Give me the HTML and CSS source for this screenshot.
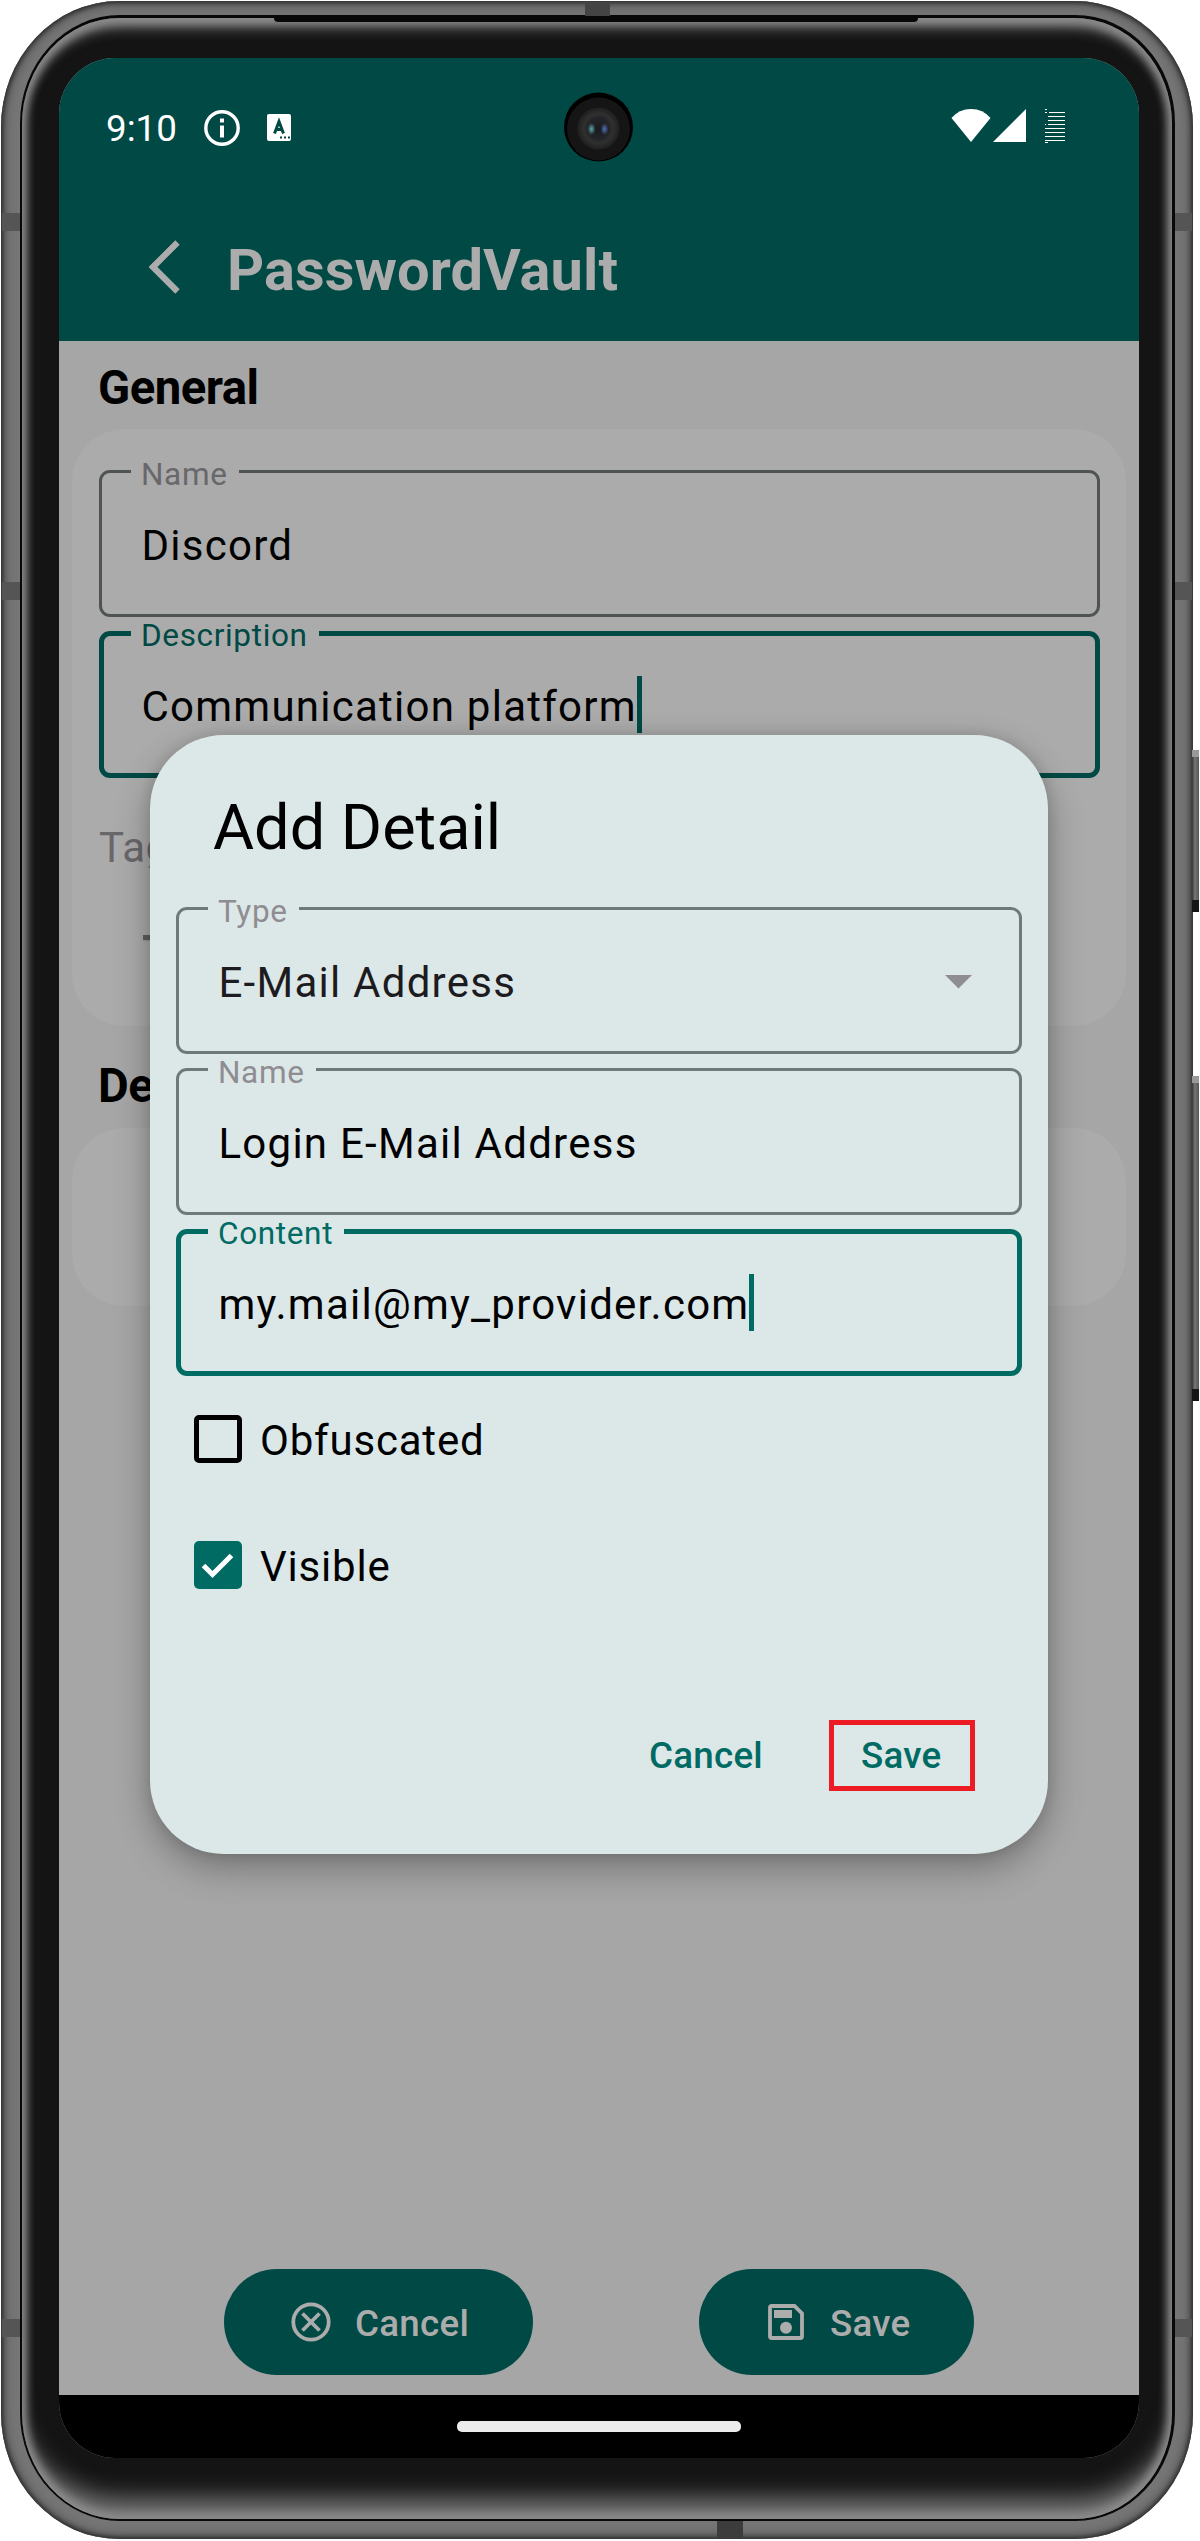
FILE: index.html
```html
<!DOCTYPE html>
<html lang="en">
<head>
<meta charset="utf-8">
<title>PasswordVault</title>
<link rel="stylesheet" href="styles.css">
</head>
<body>
<div class="phone">
  <i class="band band-left b1"></i><i class="band band-left b2"></i><i class="band band-left b3"></i>
  <i class="band band-right b1"></i><i class="band band-right b2"></i><i class="band band-right b3"></i>
  <i class="band band-top"></i><i class="band band-bottom"></i>
  <i class="key key-power"></i><i class="key key-volume"></i>
  <div class="seam">
    <div class="glass">
      <i class="speaker"></i>
      <div class="screen">
        <header class="appbar">
          <div class="status">
            <span class="clock">9:10</span>
            <svg class="st-info" width="36" height="36" viewBox="0 0 36 36"><circle cx="18" cy="18" r="16.2" fill="none" stroke="#fff" stroke-width="3.4"/><path d="M16 8.5h4v4h-4zM16 15.5h4v12h-4z" fill="#fff"/></svg>
            <svg class="st-a" width="24" height="27" viewBox="0 0 24 27"><rect width="24" height="27" rx="2" fill="#fff"/><path d="M7.5 19.5 12 7.500 16.500 19.500M9 15.500h6" fill="none" stroke="#004944" stroke-width="3"/><path d="M13 22.500h2v2h-2zM17 22.500h2v2h-2zM21 22.500h2v2h-2z" fill="#004944"/></svg>
            <span class="grow"></span>
            <svg class="st-wifi" width="40" height="33" viewBox="0 0 40 33"><path d="M0.500 9Q8 0 20 0T39.500 9L20 33z" fill="#fff"/></svg>
            <svg class="st-cell" width="33" height="33" viewBox="0 0 33 33"><path d="M0 33 33 0v33z" fill="#fff"/></svg>
            <svg class="st-batt" width="20" height="34" viewBox="0 0 20 34" shape-rendering="crispEdges"><path d="M4 3h16v1H4zM3 7h17v1H3zM3 11h17v1H3zM3 15h17v1H3zM0 19h20v1H0zM0 23h20v1H0zM0 27h20v1H0zM0 31h20v1H0zM0 0h2v1H0zM0 3h2v1H0zM0 15h1v1H0zM0 33h3v1H0z" fill="#fff"/></svg>
          </div>
          <div class="titlebar">
            <svg width="32" height="54" viewBox="0 0 32 54"><path d="M28.500 2.500 4 27l24.500 24.500" fill="none" stroke="#acacac" stroke-width="6.200"/></svg>
            <h1>PasswordVault</h1>
          </div>
        </header>
        <main class="content">
          <h2>General</h2>
          <section class="card general">
            <div class="field dim"><label>Name</label><span class="value">Discord</span></div>
            <div class="field dim active"><label>Description</label><span class="value">Communication platform</span><i class="caret"></i></div>
            <div class="tags">Tags</div>
            <svg class="plus" width="37" height="37" viewBox="0 0 37 37"><path d="M0 18.500h37M18.500 0v37" stroke="#5e6061" stroke-width="5.250"/></svg>
          </section>
          <h2 class="second">Details</h2>
          <section class="card details"></section>
          <div class="actions">
            <button class="pill pill-cancel"><svg width="40" height="40" viewBox="0 0 40 40"><circle cx="20" cy="20" r="17.700" fill="none" stroke="#acacac" stroke-width="3.800"/><path d="m11.500 11.500 17 17m0-17-17 17" stroke="#acacac" stroke-width="3.800"/></svg><span>Cancel</span></button>
            <button class="pill pill-save"><svg width="36" height="36" viewBox="0 0 36 36"><path d="M3.500 2H26.500L34 9.500V32.500Q34 34 32.500 34H3.500Q2 34 2 32.500V3.500Q2 2 3.500 2z" fill="none" stroke="#acacac" stroke-width="3.800"/><path d="M6 6h18v8H6z" fill="#acacac"/><circle cx="18" cy="23.700" r="6" fill="#acacac"/></svg><span>Save</span></button>
          </div>
        </main>
        <footer class="navbar"><i class="handle"></i></footer>
        <div class="dialog">
          <h3>Add Detail</h3>
          <div class="field"><label>Type</label><span class="value soft">E-Mail Address</span><i class="grow"></i><svg class="arrow" width="27" height="14" viewBox="0 0 27 14"><path d="M0 0h27L13.500 13.500z" fill="#8f8d92"/></svg></div>
          <div class="field"><label>Name</label><span class="value">Login E-Mail Address</span></div>
          <div class="field active"><label>Content</label><span class="value">my.mail@my_provider.com</span><i class="caret"></i></div>
          <div class="check"><i class="box"></i><span>Obfuscated</span></div>
          <div class="check"><i class="box on"><svg width="48" height="48" viewBox="0 0 48 48"><path d="M9.500 24.500 18.500 33.500 37.500 14.500" fill="none" stroke="#fff" stroke-width="5"/></svg></i><span>Visible</span></div>
          <div class="buttons"><span class="text-btn">Cancel</span><span class="text-btn boxed">Save</span></div>
        </div>
        <svg class="camera" width="70" height="70" viewBox="0 0 70 70">
          <defs>
            <radialGradient id="ring"><stop offset="0" stop-color="#1a1b20"/><stop offset=".5" stop-color="#232427"/><stop offset=".7" stop-color="#303030"/><stop offset="1" stop-color="#1f1f1f"/></radialGradient>
            <radialGradient id="teal"><stop offset="0" stop-color="#58a8a8"/><stop offset="1" stop-color="#58a8a8" stop-opacity="0"/></radialGradient>
            <radialGradient id="blue"><stop offset="0" stop-color="#4f70c0"/><stop offset="1" stop-color="#4f70c0" stop-opacity="0"/></radialGradient>
          </defs>
          <circle cx="34.500" cy="35" r="34.500" fill="#000"/><circle cx="34.500" cy="37" r="31.500" fill="#151515"/><circle cx="34.500" cy="36.500" r="21" fill="url(#ring)"/>
          <ellipse cx="27.500" cy="37" rx="4" ry="6" fill="url(#teal)"/><ellipse cx="40.500" cy="37" rx="4" ry="6" fill="url(#blue)"/>
        </svg>
      </div>
    </div>
  </div>
</div>
</body>
</html>
```
FILE: styles.css
```css
* { box-sizing: border-box; }
body { margin: 0; background: #fff; font-family: Roboto, "Liberation Sans", sans-serif; }
h1, h2, h3 { margin: 0; font-weight: 400; }
i { display: block; font-style: normal; }
svg { display: block; flex: none; }
.grow { flex: 1; }

/* Device body */
.phone {
  position: relative; width: 1192px; height: 2538px; margin: 1px 0 0 1px; padding: 14px 18px 18px 19px;
  border-radius: 118px / 126px; background: #767676;
  box-shadow: inset 0 0 4px 2px #2c2e2d, inset 0 0 12px 3px #505050;
}
.seam { height: 100%; padding: 3px 3px 2px 2px; border-radius: 100px / 108px; background: #080808; }
.glass {
  position: relative; height: 100%; padding: 40px 35px 61px 37px; border-radius: 98px / 106px; background: #141414;
  box-shadow: inset 0 0 8px 5px #8c8c8c, inset 0 18px 14px -9px #7c7c7c, inset 0 -34px 24px -14px #7c7c7c;
}
.speaker { position: absolute; left: 252px; top: 0; width: 644px; height: 4px; background: #080808; border-radius: 0 0 8px 8px; }
.band { position: absolute; background: #555; }
.band-left { left: 1px; width: 18px; height: 18px; }
.band-right { right: 1px; width: 17px; height: 18px; }
.b1 { top: 212px; } .b2 { top: 581px; } .b3 { top: 2318px; }
.band-top { left: 584px; top: 1px; width: 25px; height: 14px; background: #444; }
.band-bottom { left: 716px; bottom: 1px; width: 26px; height: 17px; background: #3c3c3c; }
.key { position: absolute; left: 1191px; width: 7px; background: linear-gradient(90deg, #333, #777 40%, #555); border-top: 7px solid #999; border-bottom: 12px solid #151515; }
.key-power { top: 749px; height: 162px; }
.key-volume { top: 1075px; height: 325px; }

/* Screen */
.screen { position: relative; display: flex; flex-direction: column; width: 1080px; height: 2400px; border-radius: 56px; overflow: hidden; background: #a6a6a6; }
.appbar { height: 283px; background: #004944; flex: none; }
.status { display: flex; height: 134px; padding: 51px 74px 0 47px; color: #fff; }
.clock { width: 98px; padding-top: 1px; font-size: 36.750px; line-height: 37px; }
.st-info { margin: 1px 27px 0 0; }
.st-a { margin-top: 5px; }
.st-cell { margin: 0 19px 0 2px; }
.titlebar { display: flex; align-items: center; gap: 46px; height: 149px; padding: 0 0 0 90px; }
.titlebar h1 { padding-top: 7px; font-size: 57.750px; line-height: 70px; font-weight: 700; letter-spacing: .100px; color: #acacac; }

.content { flex: 1; display: flex; flex-direction: column; padding: 18px 13px 0; }
.content h2 { font-size: 47.250px; line-height: 56px; height: 70px; padding: 1px 0 0 26px; font-weight: 700; letter-spacing: -.500px; color: #000; }
.content .second { height: 72px; margin-top: 30px; padding-top: 2px; }
.card { background: #ababab; border-radius: 52.500px; }
.general { height: 597px; padding: 41px 26px 0 27px; }
.details { height: 178px; }
.tags { margin-top: 45px; font-size: 42px; line-height: 50px; letter-spacing: .400px; color: #68686b; }
.plus { margin: 46px 0 0 44px; }
.actions { display: flex; gap: 166px; margin: auto 0 20px 152px; }
.pill { display: flex; align-items: center; height: 106px; border: 0; padding: 0; border-radius: 53px; background: #004944; color: #acacac; font: 500 36.750px/44px Roboto, sans-serif; letter-spacing: .260px; }
.pill-cancel { width: 309px; padding-left: 67px; gap: 24px; }
.pill-save { width: 275px; padding-left: 69px; gap: 26px; }
.pill span { padding-top: 3px; }
.navbar { flex: none; height: 63px; background: #000; padding-top: 26px; }
.handle { width: 284px; height: 11px; margin: 0 auto; border-radius: 5px; background: #ececec; }

/* Outlined text fields */
.field { position: relative; display: flex; align-items: center; height: 147px; margin-bottom: 14px; padding: 4px 47px 0 39.500px; border: 3px solid #6f7977; border-radius: 11px; background: #dce7e8; }
.field label { position: absolute; left: 29px; top: -12px; padding: 0 11px 0 10px; background: inherit; font-size: 31.500px; line-height: 28px; letter-spacing: .650px; color: #8f8d92; }
.value { font-size: 42px; line-height: 50px; letter-spacing: 1.250px; color: #000; white-space: nowrap; }
.value.soft { color: #1c1b20; }
.arrow { margin-bottom: 2px; }
.field.active { border: 5px solid #006b63; padding: 0 44px 0 37.500px; }
.active .value { padding-top: 4px; }
.field.active label { left: 27px; top: -14px; color: #006b63; }
.caret { width: 5px; height: 57px; background: #006b63; }
.field.dim { background: #ababab; border-color: #4f5453; }
.field.dim label { color: #68686b; }
.field.dim.active { border-color: #004944; }
.field.dim.active label { color: #004944; }
.dim .caret { background: #004944; }

/* Dialog */
.dialog { position: absolute; left: 91px; top: 677px; width: 898px; height: 1119px; padding: 35px 26px 0; border-radius: 73.500px; background: #dce7e8; box-shadow: 0 14px 36px rgba(0,0,0,.300), 0 0 14px rgba(0,0,0,.120); }
.dialog h3 { height: 137px; padding: 15px 0 0 37px; font-size: 63px; line-height: 86px; color: #000; }
.check { display: flex; align-items: center; gap: 18px; height: 126px; padding-left: 18px; font-size: 42px; line-height: 50px; letter-spacing: .800px; color: #000; }
.check span { padding-top: 3px; }
.dialog .field + .check { margin-top: -14px; }
.box { width: 48px; height: 48px; border: 5px solid #000; border-radius: 5px; }
.box.on { border: 0; background: #006b63; }
.buttons { display: flex; justify-content: flex-end; align-items: center; gap: 66px; padding-right: 47px; margin-top: 92px; }
.text-btn { font-size: 36.750px; line-height: 44px; font-weight: 500; letter-spacing: .260px; color: #006b63; }
.boxed { width: 146px; height: 71px; padding: 9px 0 0 27px; border: 5px solid #ed1c24; }
.camera { position: absolute; left: 505px; top: 34px; }
```
